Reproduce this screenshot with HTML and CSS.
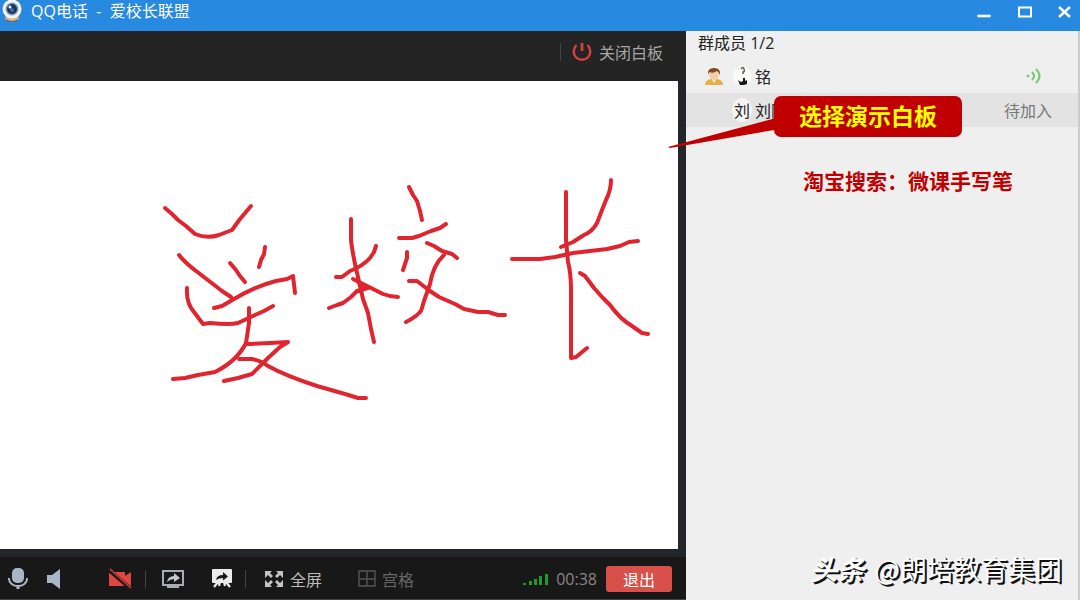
FILE: index.html
```
<!DOCTYPE html>
<html lang="zh-CN">
<head>
    <meta charset="UTF-8">
    <meta name="viewport" content="width=device-width, initial-scale=1.0">
    <title>QQ电话 - 爱校长联盟</title>
    <link rel="stylesheet" href="styles.css">
</head>
<body>
    <div class="titlebar">
        <svg class="app-icon" width="24" height="24" viewBox="0 0 24 24" aria-hidden="true">
            <path d="M6 15h12l1 4q-7 5-14 0z" fill="#d9b48c"/>
            <path d="M6 19q6 4 12 0l-1 2q-5 2-10 0z" fill="#7a5f4a"/>
            <circle cx="12" cy="9" r="9.5" fill="#f4f5f8"/>
            <circle cx="12" cy="9" r="6.5" fill="#8299b8"/>
            <circle cx="12" cy="9" r="5" fill="#17365f"/>
            <circle cx="12" cy="10" r="2" fill="#3b6da4"/>
            <circle cx="10" cy="7" r="1.5" fill="#e8f2ff"/>
        </svg>
        <h1>QQ电话 &nbsp;-&nbsp; 爱校长联盟</h1>
        <div class="window-buttons">
            <button aria-label="最小化">
                <svg width="16" height="16" viewBox="0 0 16 16"><path d="M1.5 12h13" stroke="#fff" stroke-width="2.6"/></svg>
            </button>
            <button aria-label="最大化">
                <svg width="16" height="16" viewBox="0 0 16 16"><rect x="3" y="3.5" width="12" height="9" fill="none" stroke="#fff" stroke-width="2"/></svg>
            </button>
            <button aria-label="关闭">
                <svg width="16" height="16" viewBox="0 0 16 16"><path d="M3 3l11 10M14 3L3 13" stroke="#fff" stroke-width="2.4"/></svg>
            </button>
        </div>
    </div>

    <div class="container">
        <div class="stage">
            <div class="stage-header">
                <span class="divider"></span>
                <button class="close-board">
                    <svg width="22" height="22" viewBox="0 0 22 22" aria-hidden="true">
                        <path d="M5.6 4.2A8.3 8.3 0 1 0 16.4 4.2" fill="none" stroke="#d5423c" stroke-width="2.4"/>
                        <path d="M11 2v8" stroke="#d5423c" stroke-width="2.8"/>
                    </svg>
                    关闭白板
                </button>
            </div>

            <div class="board">
                <!-- pen strokes -->
                <svg class="ink" viewBox="0 81 678 468" preserveAspectRatio="xMinYMin meet" role="img" aria-label="手写笔迹">
                    <path d="M165 208L172 214L178 220L186 226L195 234Q207 239 219 235L232 230L240 219L251 206"/>
                    <path d="M179 255Q185 263 200 274L222 291L231 297"/>
                    <path d="M230 263L236 270L240 276L245 282"/>
                    <path d="M265 247L264 254L261 260L259 267"/>
                    <path d="M214 308L222 306L234 299Q256 286 276 281L287 279L293 276L295 293"/>
                    <path d="M187 288Q186 303 194 312L203 324L210 323Q230 325 238 323L255 315L264 311L273 306"/>
                    <path d="M249 308L249 323L246 343Q237 361 215 372L198 375L185 378L173 379"/>
                    <path d="M248 344L270 343L288 342L280 347L268 358L252 374L238 378L224 381"/>
                    <path d="M239 359L252 359Q262 361 268 366Q286 376 317 386L345 394L358 398L366 398"/>
                    <path d="M351 219L351 240Q353 257 358 277L363 299L368 313L371 329L374 342"/>
                    <path d="M336 277L342 277L350 271Q363 266 370 258L374 252L376 246"/>
                    <path d="M329 308L337 305L343 303L351 297L357 291L368 288"/>
                    <path d="M353 279L361 283L373 289L383 294Q391 297 398 297"/>
                    <path d="M357 280L361 286L367 287L359 291"/>
                    <path d="M409 187L413 195L417 201L420 211L422 220"/>
                    <path d="M399 238L412 238L419 236L431 231L440 228L446 224"/>
                    <path d="M407 252L407 258L403 270"/>
                    <path d="M427 243L434 246L442 251L452 254L457 258"/>
                    <path d="M444 255Q433 265 430 284L424 301L421 311Q416 317 406 322"/>
                    <path d="M409 281L417 281L430 291L439 297L455 304L464 309L478 312L488 312L498 315L505 315"/>
                    <path d="M566 192L566 240L568 262Q571 273 571 290L571 358L576 357L587 348"/>
                    <path d="M611 180Q611 190 606 200L602 210L597 223Q592 232 584 235L573 242L561 247"/>
                    <path d="M512 259L540 259L555 257L573 253L607 249L620 246L629 242L638 241"/>
                    <path d="M580 273L585 276L594 288L602 297L610 305Q620 319 632 326L642 333L648 334"/>
                </svg>
            </div>

            <div class="toolbar">
                <div class="tools">
                    <button class="tool mic" aria-label="麦克风">
                        <svg width="22" height="24" viewBox="0 0 22 24">
                            <rect x="5" y="1" width="12" height="15" rx="5" fill="#aab6c5"/>
                            <path d="M2 11v1a9 7 0 0 0 18 0v-1" fill="none" stroke="#aab6c5" stroke-width="2"/>
                            <path d="M11 18v4" stroke="#aab6c5" stroke-width="3"/>
                        </svg>
                    </button>
                    <button class="tool speaker" aria-label="扬声器">
                        <svg width="18" height="22" viewBox="0 0 18 22"><path d="M2 7h5l8-6v20l-8-6H2z" fill="#aab6c5"/></svg>
                    </button>
                    <button class="tool camera" aria-label="摄像头">
                        <svg width="26" height="24" viewBox="0 0 26 24">
                            <path d="M2 5h16v4l6-4v14l-6-4v4H2z" fill="#e2473d"/>
                            <path d="M2 3l22 19" stroke="#181818" stroke-width="4"/>
                            <path d="M3 2l21 19" stroke="#a33b35" stroke-width="2"/>
                        </svg>
                    </button>
                    <span class="divider"></span>
                    <button class="tool share" aria-label="分享屏幕">
                        <svg width="24" height="22" viewBox="0 0 24 22">
                            <rect x="2" y="3" width="20" height="14" fill="none" stroke="#a7adb3" stroke-width="2"/>
                            <path d="M6 18h12v2H6zM10 17h4v3h-4z" fill="#a7adb3"/>
                            <path d="M6 14q1-6 7-6V5l6 5-6 4v-3q-4 0-7 3z" fill="#c5cace"/>
                        </svg>
                    </button>
                    <button class="tool present" aria-label="演示白板">
                        <svg width="22" height="22" viewBox="0 0 22 22">
                            <rect x="1" y="1" width="20" height="14" rx="1" fill="#ececec"/>
                            <path d="M7 14l-4 5M15 14l4 5M9 14l-1 4M13 14l1 4" stroke="#ececec" stroke-width="2.2"/>
                            <path d="M5 12q1-5 7-5V4l5 4.5-5 4V10q-4 0-7 2z" fill="#181818"/>
                        </svg>
                    </button>
                    <span class="divider"></span>
                    <button class="tool">
                        <svg width="20" height="20" viewBox="0 0 20 20" fill="#c4c4c4" aria-hidden="true">
                            <path d="M1 2h7L6 4l3 3-2 2-3-3-3 3zM19 2h-7l2 2-3 3 2 2 3-3 3 3zM1 18h7l-2-2 3-3-2-2-3 3-3-3zM19 18h-7l2-2-3-3 2-2 3 3 3-3z"/>
                        </svg>
                        全屏
                    </button>
                    <button class="tool grid" disabled>
                        <svg width="18" height="18" viewBox="0 0 18 18" aria-hidden="true">
                            <path d="M1 1h16v15H1zM9 1v15M1 9h16" fill="none" stroke="#555" stroke-width="1.4"/>
                        </svg>
                        宫格
                    </button>
                </div>
                <div class="call-status">
                    <svg width="26" height="14" viewBox="0 0 26 14" fill="#239b2c" aria-hidden="true">
                        <path d="M0 11h3v2H0zM6 9h3v4H6zM11 7h3v6h-3zM16 4h3v9h-3zM22 2h3v11h-3z"/>
                    </svg>
                    <span class="timer">00:38</span>
                    <button class="exit-btn">退出</button>
                </div>
            </div>
        </div>

        <div class="sidebar">
            <h2>群成员 1/2</h2>
            <ul class="members">
                <li>
                    <svg class="role" width="20" height="20" viewBox="0 0 20 20" aria-hidden="true">
                        <path d="M1 19q0-5 6-6h6q6 1 6 6z" fill="#e9ae45"/>
                        <path d="M7 12h6l-3 5z" fill="#fff2df"/>
                        <ellipse cx="10" cy="8" rx="5" ry="6" fill="#f4cda5"/>
                        <path d="M4 9Q3 2 10 2t6 7q-1-3-3-4Q9 8 5 6z" fill="#7b4a2b"/>
                    </svg>
                    <svg class="avatar" width="20" height="20" viewBox="0 0 20 20" aria-hidden="true">
                        <circle cx="10" cy="10" r="9.5" fill="#fafafa"/>
                        <path d="M9 3q2-3 3 0t-1 3v2" fill="none" stroke="#6b6258" stroke-width="1.6"/>
                        <path d="M6 14l3 2 2-1v-3h2v3l2-1v4l-3 1H8z" fill="#171717"/>
                    </svg>
                    <span class="name">铭</span>
                    <svg class="voice" width="18" height="18" viewBox="0 0 18 18" fill="none" stroke="#7cc576" stroke-width="2" aria-hidden="true">
                        <circle cx="3" cy="9" r="1" fill="#7cc576" stroke-width="1"/>
                        <path d="M7 5q4 4 0 8M11 2q7 7 0 14"/>
                    </svg>
                </li>
                <li class="waiting">
                    <span class="role"></span>
                    <span class="avatar">刘</span>
                    <span class="name">刘阳</span>
                    <span class="state">待加入</span>
                </li>
            </ul>
            <p class="promo">淘宝搜索：微课手写笔</p>

            <div class="callout">
                <svg class="callout-tail" width="112" height="34" viewBox="0 0 112 34" aria-hidden="true">
                    <path d="M0 32L112 2V14L2 33z" fill="#c00000"/>
                </svg>
                选择演示白板
            </div>
            <div class="watermark"><b>头条</b> @朗培教育集团</div>
        </div>
    </div>
</body>
</html>
```

FILE: styles.css
```
body, html {
    margin: 0;
    padding: 0;
    height: 100%;
}

body {
    display: flex;
    flex-direction: column;
    overflow: hidden;
    font-family: "Open Sans", "Noto Sans CJK SC", sans-serif;
    font-size: 16px;
    background-color: #efefef;
}

button {
    display: flex;
    align-items: center;
    padding: 0;
    border: none;
    background: none;
    font: inherit;
    color: inherit;
    cursor: pointer;
}

svg {
    display: block;
    flex-shrink: 0;
}

/* Title bar */
.titlebar {
    display: flex;
    align-items: center;
    height: 31px;
    background-color: #2789df;
    color: #fff;
}

.titlebar h1 {
    flex: 1;
    margin: 0 0 9px 7px;
    font-size: 16px;
    font-weight: normal;
    line-height: 22px;
}

.app-icon {
    margin-bottom: 7px;
}

.window-buttons {
    display: flex;
    gap: 24px;
    padding: 0 8px 8px 0;
}

.container {
    display: flex;
    flex: 1;
    min-height: 0;
}

/* Whiteboard side */
.stage {
    display: flex;
    flex: 1;
    flex-direction: column;
    min-width: 0;
    background-color: #22262b;
}

.stage-header {
    display: flex;
    align-items: center;
    justify-content: flex-end;
    gap: 10px;
    height: 50px;
    padding: 0 23px 8px 0;
    box-sizing: border-box;
    background-color: #242424;
}

.divider {
    width: 1px;
    height: 18px;
    background-color: #444;
}

.close-board {
    gap: 6px;
    color: #a6a6a6;
}

.board {
    flex: 1;
    min-height: 0;
    margin: 0 8px 8px 0;
    background-color: #fff;
}

.ink {
    width: 100%;
    height: 100%;
    fill: none;
    stroke: #e0252e;
    stroke-width: 4;
    stroke-linecap: round;
    stroke-linejoin: round;
}

.toolbar {
    display: flex;
    align-items: center;
    justify-content: space-between;
    height: 43px;
    padding: 2px 14px 0 7px;
    box-sizing: border-box;
    background-color: #181818;
    border-bottom: 1px solid #444;
}

.tools,
.call-status {
    display: flex;
    align-items: center;
}

.tool {
    gap: 6px;
    color: #bcbcbc;
}

.mic {
    margin-right: 16px;
}

.speaker {
    margin-right: 44px;
}

.camera {
    margin-right: 12px;
}

.share {
    margin: 0 26px 0 15px;
}

.present {
    margin-right: 12px;
}

.divider + .tool:not(.share) {
    margin-left: 18px;
}

.grid {
    margin-left: 36px;
    color: #666;
}

.timer {
    margin: 0 9px 0 7px;
    color: #8c8585;
}

.exit-btn {
    justify-content: center;
    width: 66px;
    height: 26px;
    border-radius: 3px;
    background-color: #d9504a;
    color: #fff;
}

/* Member list */
.sidebar {
    position: relative;
    width: 394px;
    box-sizing: border-box;
    border-right: 2px solid #c9cdd2;
    background-color: #efefef;
    color: #222;
}

.sidebar h2 {
    margin: 0;
    padding: 1px 12px 5px;
    font-size: 16px;
    font-weight: normal;
    line-height: 22px;
}

.members {
    margin: 0;
    padding: 0;
    list-style-type: none;
}

.members li {
    display: flex;
    align-items: center;
    height: 34px;
    padding: 0 26px 0 18px;
}

.members .waiting {
    background-color: #e3e3e3;
}

.role {
    width: 20px;
    margin-right: 8px;
}

.avatar {
    width: 20px;
    margin-right: 3px;
    text-align: center;
}

.waiting .avatar {
    border-radius: 50%;
    background-color: #f4f4f4;
}

.name {
    flex: 1;
}

.voice {
    margin-right: 9px;
}

.state {
    color: #777;
}

.promo {
    margin: 39px 0 0 117px;
    color: #c00000;
    font-size: 21px;
    font-weight: bold;
    line-height: 30px;
}

/* Pointer to the board */
.callout {
    position: absolute;
    top: 65px;
    left: 88px;
    padding: 0 25px;
    border-radius: 7px;
    background-color: #c00000;
    color: #ff0;
    font-size: 23px;
    font-weight: bold;
    line-height: 41px;
    white-space: nowrap;
}

.callout-tail {
    position: absolute;
    top: 19px;
    left: -106px;
}

.watermark {
    position: absolute;
    right: 16px;
    bottom: 12px;
    color: #fff;
    font-family: "Noto Sans CJK SC", sans-serif;
    font-size: 27px;
    line-height: 38px;
    text-shadow: 1px 1px 0 #111, 2px 2px 0 #111;
    white-space: nowrap;
}

.watermark b {
    margin-right: 4px;
    font-style: italic;
}
```
